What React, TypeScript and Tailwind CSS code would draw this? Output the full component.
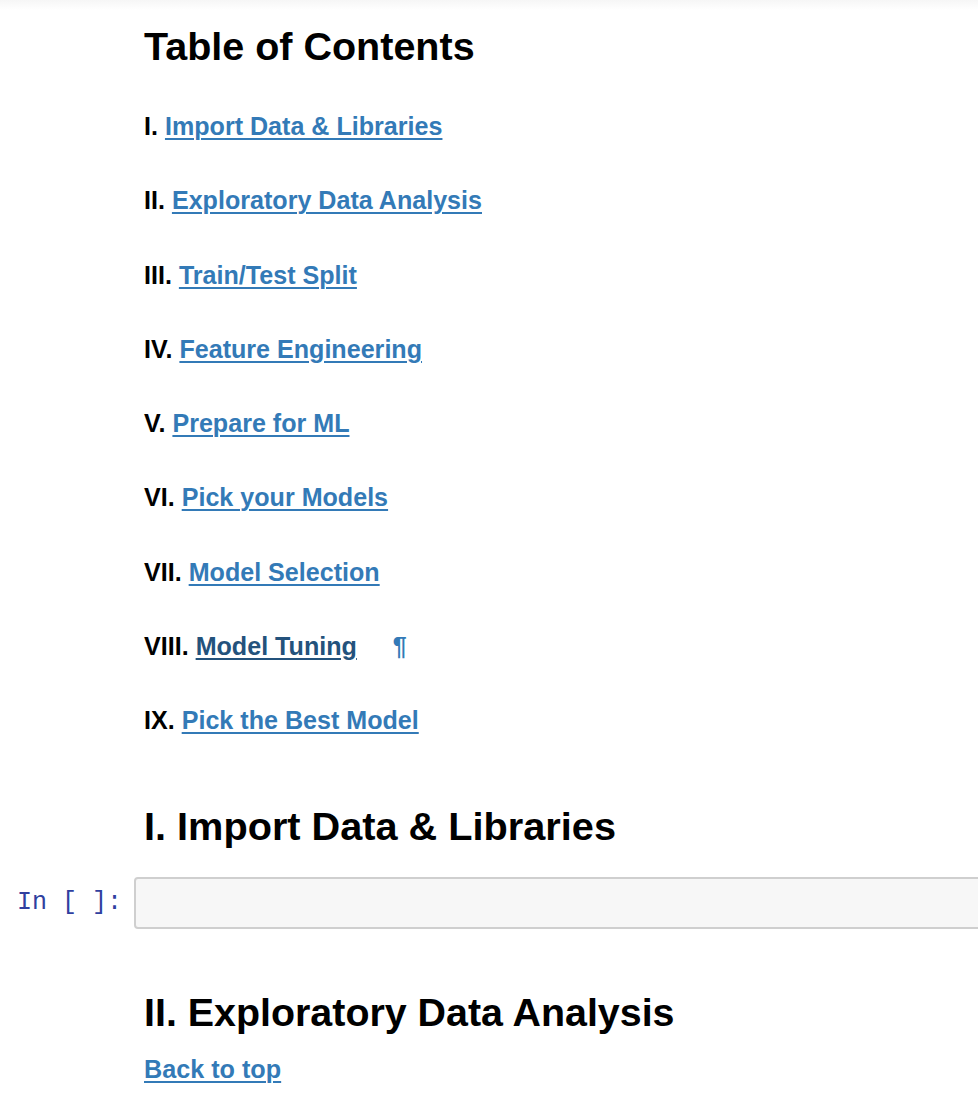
import React from "react";

const items: { num: string; label: string; active?: boolean }[] = [
  { num: "I.", label: "Import Data & Libraries" },
  { num: "II.", label: "Exploratory Data Analysis" },
  { num: "III.", label: "Train/Test Split" },
  { num: "IV.", label: "Feature Engineering" },
  { num: "V.", label: "Prepare for ML" },
  { num: "VI.", label: "Pick your Models" },
  { num: "VII.", label: "Model Selection" },
  { num: "VIII.", label: "Model Tuning", active: true },
  { num: "IX.", label: "Pick the Best Model" },
];

export default function App() {
  return (
    <div
      className="w-[978px] h-[1106px] overflow-hidden bg-white text-black"
      style={{ fontFamily: '"Liberation Sans", Arial, Helvetica, sans-serif' }}
    >
      <div className="h-[10px] bg-gradient-to-b from-[#f6f6f6] to-white" />
      <div className="pl-[144px]">
        <h2 className="mt-[12px] text-[39.5px] leading-[48px] font-bold">Table of Contents</h2>
        <div className="mt-[41px] flex flex-col gap-[44.25px]">
          {items.map((it) => (
            <div key={it.num} className="text-[25.1px] leading-[30px] font-bold flex items-baseline">
              <span>{it.num}</span>
              <span className="w-[7px]" />
              <a
                href="#"
                className={
                  it.active
                    ? "text-[#23527c] underline decoration-[2px] underline-offset-[3px]"
                    : "text-[#337ab7] underline decoration-[2px] underline-offset-[3px]"
                }
              >
                {it.label}
              </a>
              {it.active && <span className="ml-[36px] text-[#337ab7] font-bold">¶</span>}
            </div>
          ))}
        </div>
        <h2 className="mt-[66.5px] text-[39.7px] leading-[48px] font-bold">I. Import Data &amp; Libraries</h2>
      </div>
      <div className="mt-[27.5px] flex items-center overflow-hidden">
        <div
          className="w-[134px] shrink-0 pr-[12px] text-right text-[25px] text-[#303f9f] whitespace-pre"
          style={{ fontFamily: '"Liberation Mono", "Courier New", monospace' }}
        >
          {"In [ ]:"}
        </div>
        <div className="h-[52px] flex-1 mr-[-10px] rounded-[4px] border-2 border-[#cfcfcf] bg-[#f7f7f7]" />
      </div>
      <div className="pl-[144px]">
        <h2 className="mt-[58.5px] text-[39.4px] leading-[48px] font-bold">II. Exploratory Data Analysis</h2>
        <div className="mt-[18.8px] text-[25.2px] leading-[30px] font-bold">
          <a href="#" className="text-[#337ab7] underline decoration-[2px] underline-offset-[3px]">
            Back to top
          </a>
        </div>
      </div>
    </div>
  );
}
